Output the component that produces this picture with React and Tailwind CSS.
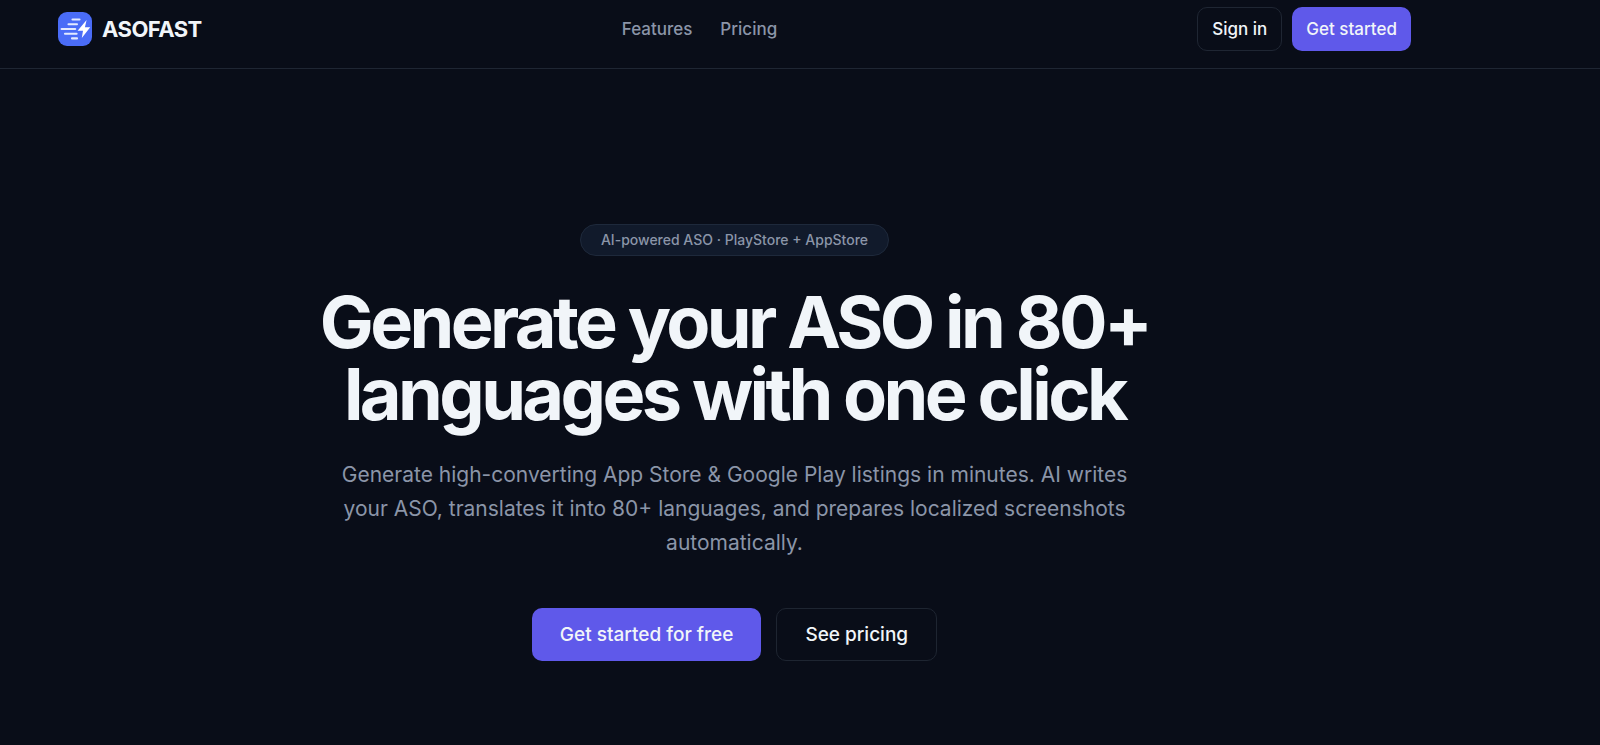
const navLinks = [
  { label: 'Features', href: '#features' },
  { label: 'Pricing', href: '#pricing' },
]

function Logo() {
  return (
    <svg className="w-[34px] h-[34px]" viewBox="0 0 34 34" fill="none" aria-hidden="true">
      <rect width="34" height="34" rx="9" fill="#4a6cf7" />
      <g stroke="#e4eaff" strokeWidth="2.1" strokeLinecap="round">
        <path d="M14.5 7.5h7" />
        <path d="M10.5 12.2h8.5" />
        <path d="M3.6 17h13.6" />
        <path d="M7 21.7h11.6" />
        <path d="M14 26.4h5" />
      </g>
      <path d="M28.6 8 L19.6 18.8 H25 L23.8 26 L32.2 15.2 H26.9 Z" fill="#ffffff" />
    </svg>
  )
}

function Header() {
  return (
    <header className="border-b border-[#1f2633]">
      <div className="pl-[58px] pr-[189px] pt-[7px] pb-[17px] flex items-center justify-between">
        <a href="/" className="flex items-center gap-[10px]">
          <Logo />
          <span className="text-[22px] leading-8 font-bold tracking-tight">ASOFAST</span>
        </a>

        <nav className="flex items-center gap-7">
          {navLinks.map((link) => (
            <a
              key={link.href}
              href={link.href}
              className="text-[17px] leading-6 font-medium text-[#8b95a8] hover:text-white"
            >
              {link.label}
            </a>
          ))}
        </nav>

        <div className="flex items-center gap-[10px]">
          <button className="h-11 px-[14px] rounded-[10px] border border-[#1f2633] text-[17px] leading-6 font-medium">
            Sign in
          </button>
          <button className="h-11 px-[14px] rounded-[10px] bg-[#5f59ea] hover:bg-[#6d67f0] text-[17px] leading-6 font-medium">
            Get started
          </button>
        </div>
      </div>
    </header>
  )
}

function Hero() {
  return (
    <main className="pl-[58px] pr-[189px] pt-[155px] pb-20 flex flex-col items-center text-center">
      <p className="px-5 py-1 rounded-full border border-[#1e293b] bg-[#111a2b] text-[14px] leading-[22px] font-medium text-[#8b95a8]">
        AI-powered ASO · PlayStore + AppStore
      </p>

      <h1 className="mt-[30px] max-w-[880px] text-[72px] leading-[72px] font-bold tracking-tighter">
        Generate your ASO in 80+ languages with one click
      </h1>

      <p className="mt-7 max-w-[800px] text-[21px] leading-[34px] text-[#8b95a8]">
        Generate high-converting App Store &amp; Google Play listings in minutes. AI writes your
        ASO, translates it into 80+ languages, and prepares localized screenshots automatically.
      </p>

      <div className="mt-12 flex items-center gap-[15px]">
        <button className="h-[53px] px-7 rounded-[10px] bg-[#5f59ea] hover:bg-[#6d67f0] text-[19px] leading-7 font-medium">
          Get started for free
        </button>
        <button className="h-[53px] px-7 rounded-[10px] border border-[#1e2531] text-[19px] leading-7 font-medium">
          See pricing
        </button>
      </div>
    </main>
  )
}

export default function App() {
  return (
    <div className="min-h-screen bg-[#090d18] text-[#f1f5f9] font-['Inter',sans-serif]">
      <Header />
      <Hero />
    </div>
  )
}
